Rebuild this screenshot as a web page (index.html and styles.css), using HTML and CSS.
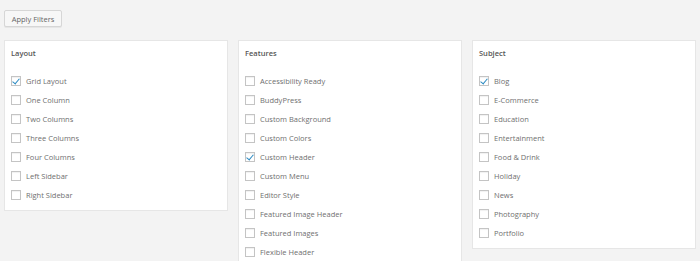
FILE: index.html
```html
<!DOCTYPE html>
<html>
<head>
<meta charset="utf-8">
<link rel="stylesheet" href="styles.css">
</head>
<body>
<div class="page">
  <div class="toolbar"><button class="btn">Apply Filters</button></div>
  <div class="groups">
    <div class="panel">
      <h4 class="title">Layout</h4>
      <ul class="list">
        <li class="row"><span class="cb on"></span>Grid Layout</li>
        <li class="row"><span class="cb"></span>One Column</li>
        <li class="row"><span class="cb"></span>Two Columns</li>
        <li class="row"><span class="cb"></span>Three Columns</li>
        <li class="row"><span class="cb"></span>Four Columns</li>
        <li class="row"><span class="cb"></span>Left Sidebar</li>
        <li class="row"><span class="cb"></span>Right Sidebar</li>
      </ul>
    </div>
    <div class="panel">
      <h4 class="title">Features</h4>
      <ul class="list">
        <li class="row"><span class="cb"></span>Accessibility Ready</li>
        <li class="row"><span class="cb"></span>BuddyPress</li>
        <li class="row"><span class="cb"></span>Custom Background</li>
        <li class="row"><span class="cb"></span>Custom Colors</li>
        <li class="row"><span class="cb on"></span>Custom Header</li>
        <li class="row"><span class="cb"></span>Custom Menu</li>
        <li class="row"><span class="cb"></span>Editor Style</li>
        <li class="row"><span class="cb"></span>Featured Image Header</li>
        <li class="row"><span class="cb"></span>Featured Images</li>
        <li class="row"><span class="cb"></span>Flexible Header</li>
      </ul>
    </div>
    <div class="panel">
      <h4 class="title">Subject</h4>
      <ul class="list">
        <li class="row"><span class="cb on"></span>Blog</li>
        <li class="row"><span class="cb"></span>E-Commerce</li>
        <li class="row"><span class="cb"></span>Education</li>
        <li class="row"><span class="cb"></span>Entertainment</li>
        <li class="row"><span class="cb"></span>Food &amp; Drink</li>
        <li class="row"><span class="cb"></span>Holiday</li>
        <li class="row"><span class="cb"></span>News</li>
        <li class="row"><span class="cb"></span>Photography</li>
        <li class="row"><span class="cb"></span>Portfolio</li>
      </ul>
    </div>
  </div>
</div>
</body>
</html>
```
FILE: styles.css
```css
html, body {
  margin: 0;
  padding: 0;
  background: #f3f3f3;
  height: 100%;
  overflow: hidden;
}
.page {
  padding: 10px 3px 0 4px;
  font-family: "Open Sans", "Noto Sans", sans-serif;
  font-size: 7.5px;
  color: #6f6f6f;
}
.toolbar {
  height: 30px;
}
.btn {
  display: block;
  width: 58px;
  height: 17px;
  padding: 0;
  margin: 0;
  border: 1px solid #d6d6d6;
  border-radius: 2px;
  background: #f7f7f7;
  box-shadow: 0 1px 0 #e6e6e6;
  font-family: inherit;
  font-size: 7.5px;
  color: #666;
  text-align: center;
}
.groups {
  display: grid;
  grid-template-columns: 224px 224px 224px;
  column-gap: 10px;
  align-items: start;
}
.panel {
  background: #fff;
  border: 1px solid #e6e6e6;
  padding: 7px 6px 6px 6px;
}
.title {
  margin: 0;
  height: 11px;
  line-height: 11px;
  font-size: 7.5px;
  font-weight: 600;
  color: #555;
}
.list {
  list-style: none;
  margin: 12px 0 0 0;
  padding: 0;
}
.row {
  display: flex;
  align-items: center;
  height: 19px;
  white-space: nowrap;
}
.cb {
  position: relative;
  flex: none;
  width: 8px;
  height: 8px;
  margin-right: 5px;
  border: 1px solid #c4c4c4;
  box-shadow: inset 0 1px 1px rgba(0,0,0,0.06);
  background: #fff;
}
.cb.on::after {
  content: "";
  position: absolute;
  left: 2px;
  top: 0px;
  width: 3px;
  height: 6px;
  border: solid #2a8ac2;
  border-width: 0 1.6px 1.6px 0;
  transform: rotate(40deg);
}
```
